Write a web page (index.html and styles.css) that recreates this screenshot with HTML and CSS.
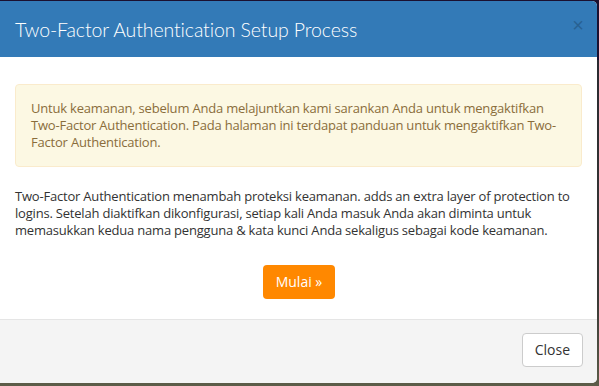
FILE: index.html
```html
<!DOCTYPE html>
<html lang="en">
<head>
	<meta charset="UTF-8">
	<title>Two-Factor Authentication</title>
	<link rel="stylesheet" href="styles.css">
</head>
<body>
	<div class="modal">
		<div class="modal-header">
			<h4 class="modal-title">Two-Factor Authentication Setup Process</h4>
			<span class="close">&times;</span>
		</div>
		<div class="modal-body">
			<div class="alert">
				Untuk keamanan, sebelum Anda melajuntkan kami sarankan Anda untuk mengaktifkan Two-Factor Authentication. Pada halaman ini terdapat panduan untuk mengaktifkan Two-Factor Authentication.
			</div>
			<p class="intro">Two-Factor Authentication menambah proteksi keamanan. adds an extra layer of protection to logins. Setelah diaktifkan dikonfigurasi, setiap kali Anda masuk Anda akan diminta untuk memasukkan kedua nama pengguna &amp; kata kunci Anda sekaligus sebagai kode keamanan.</p>
			<div class="start">
				<a href="#" class="btn btn-start">Mulai &raquo;</a>
			</div>
		</div>
		<div class="modal-footer">
			<a href="#" class="btn btn-close">Close</a>
		</div>
	</div>
</body>
</html>
```

FILE: styles.css
```css
*{
	margin: 0;
	padding: 0;
	box-sizing: border-box;
}
body{
	height: 386px;
	overflow: hidden;
	background: linear-gradient(#1b1030 0, #1b1030 60px, #2a2a30 60px, #3a3a36 300px, #5c5c48 386px);
	font-family: "Open Sans", sans-serif;
	font-size: 13px;
	color: #333;
}
.modal{
	width: 597px;
	margin-top: 1px;
	height: 382px;
	background-color: #fff;
	border-radius: 0 5px 5px 0;
	overflow: hidden;
	display: flex;
	flex-direction: column;
}
.modal-header{
	height: 56px;
	background-color: #337ab7;
	display: flex;
	align-items: center;
	justify-content: space-between;
	padding: 0 15px;
}
.modal-title{
	font-family: "Lato", sans-serif;
	font-weight: 300;
	font-size: 19.5px;
	letter-spacing: -0.1px;
	color: #fff;
}
.close{
	font-family: "Liberation Sans", sans-serif;
	font-size: 20px;
	color: #000;
	opacity: .2;
	margin-top: -7px;
	margin-right: -2px;
}
.modal-body{
	flex: 1;
	padding: 27px 15px 0;
	letter-spacing: -0.2px;
}
.alert{
	background-color: #fcf8e3;
	border: 1px solid #faebcc;
	border-radius: 4px;
	color: #8a6d3b;
	line-height: 17px;
	padding: 15px;
}
.intro{
	margin-top: 21px;
	line-height: 17px;
}
.start{
	display: flex;
	justify-content: center;
	margin-top: 26px;
}
.btn{
	display: inline-block;
	text-decoration: none;
	font-size: 14px;
	line-height: 20px;
	padding: 6px 12px;
	border-radius: 4px;
	border: 1px solid transparent;
	letter-spacing: 0;
}
.btn-start{
	background-color: #ff8800;
	color: #fff;
	margin-left: 1px;
}
.modal-footer{
	height: 64px;
	background-color: #f4f4f4;
	border-top: 1px solid #e5e5e5;
	display: flex;
	justify-content: flex-end;
	align-items: center;
	padding: 0 14px 0 15px;
}
.btn-close{
	background-color: #fff;
	border-color: #ccc;
	color: #333;
	padding: 6px 12px;
	margin-top: -3px;
}
```
